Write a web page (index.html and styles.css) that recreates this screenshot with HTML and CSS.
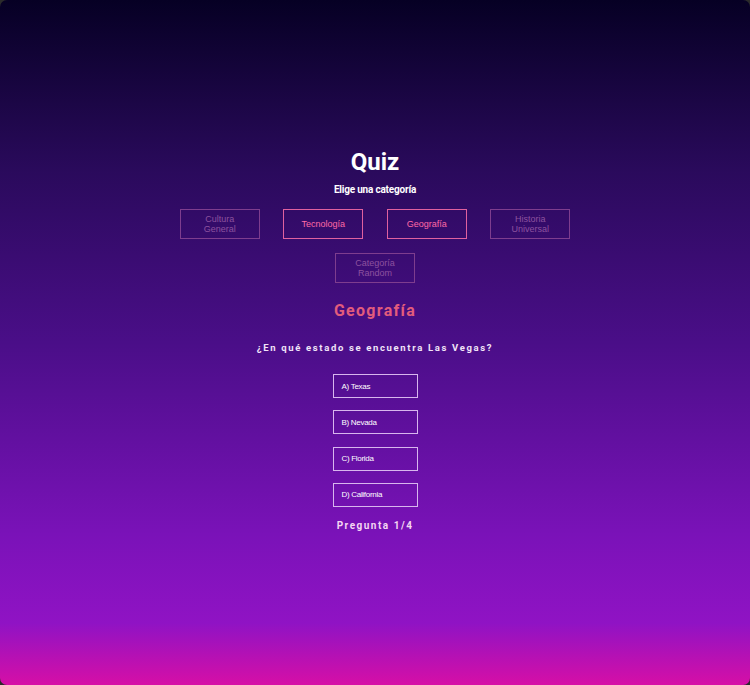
FILE: index.html
```html
<!DOCTYPE html>
<html lang="es">
<head>
<meta charset="utf-8">
<title>Quiz</title>
<link rel="stylesheet" href="styles.css">
</head>
<body>
<div class="app">
  <h1 class="title">Quiz</h1>
  <p class="subtitle">Elige una categoría</p>
  <div class="categories">
    <button class="cat cat-dim">Cultura<br>General</button>
    <button class="cat cat-on">Tecnología</button>
    <button class="cat cat-on">Geografía</button>
    <button class="cat cat-dim">Historia<br>Universal</button>
    <button class="cat cat-dim">Categoría<br>Random</button>
  </div>
  <h2 class="current">Geografía</h2>
  <p class="question">¿En qué estado se encuentra Las Vegas?</p>
  <div class="answers">
    <button class="answer">A) Texas</button>
    <button class="answer">B) Nevada</button>
    <button class="answer">C) Florida</button>
    <button class="answer">D) California</button>
  </div>
  <p class="progress">Pregunta 1/4</p>
</div>
</body>
</html>
```

FILE: styles.css
```css
html, body {
  margin: 0;
  padding: 0;
  background: #2b2b2b;
}
.app {
  width: 750px;
  height: 685px;
  box-sizing: border-box;
  border-radius: 7px;
  overflow: hidden;
  background: linear-gradient(to bottom, #060024 0%, #2a0a5c 25%, #4a0e88 50%, #7a12b8 78%, #9013c4 91%, #d60fa6 100%);
  display: flex;
  flex-direction: column;
  align-items: center;
  padding-top: 148px;
  font-family: Roboto, "Liberation Sans", sans-serif;
}
.title {
  margin: 0;
  font-size: 24px;
  line-height: 28px;
  font-weight: 700;
  color: #ffffff;
}
.subtitle {
  margin: 8px 0 0;
  font-size: 10px;
  line-height: 12px;
  font-weight: 700;
  color: #ffffff;
  letter-spacing: -0.2px;
}
.categories {
  margin-top: 13px;
  width: 480px;
  display: flex;
  flex-wrap: wrap;
  justify-content: center;
  gap: 14px 23.5px;
}
.cat {
  width: 80px;
  height: 30px;
  box-sizing: border-box;
  padding: 0 4px;
  background: transparent;
  font-family: "Liberation Sans", Arial, sans-serif;
  font-size: 9px;
  line-height: 10px;
  cursor: pointer;
}
.cat-on {
  border: 1px solid #e0619f;
  color: #ff6aa6;
}
.cat-dim {
  border: 1px solid #7e3d8e;
  color: #8d529f;
}
.current {
  margin: 18px 0 0;
  font-size: 16px;
  line-height: 20px;
  font-weight: 700;
  letter-spacing: 1.3px;
  color: #e25c7c;
}
.question {
  margin: 21px 0 0;
  font-size: 9.5px;
  line-height: 12px;
  font-weight: 700;
  letter-spacing: 1.65px;
  color: #f1e4f8;
}
.answers {
  margin-top: 20px;
  display: flex;
  flex-direction: column;
  gap: 12.3px;
}
.answer {
  width: 85px;
  height: 24px;
  box-sizing: border-box;
  border: 1px solid #d8b6ee;
  background: transparent;
  color: #ffffff;
  text-align: left;
  padding: 0 8px;
  font-family: "Liberation Sans", Arial, sans-serif;
  font-size: 8px;
  letter-spacing: -0.3px;
  cursor: pointer;
}
.progress {
  margin: 13px 0 0;
  font-size: 10px;
  line-height: 12px;
  font-weight: 700;
  letter-spacing: 1.5px;
  color: #f5d6f2;
}
```
